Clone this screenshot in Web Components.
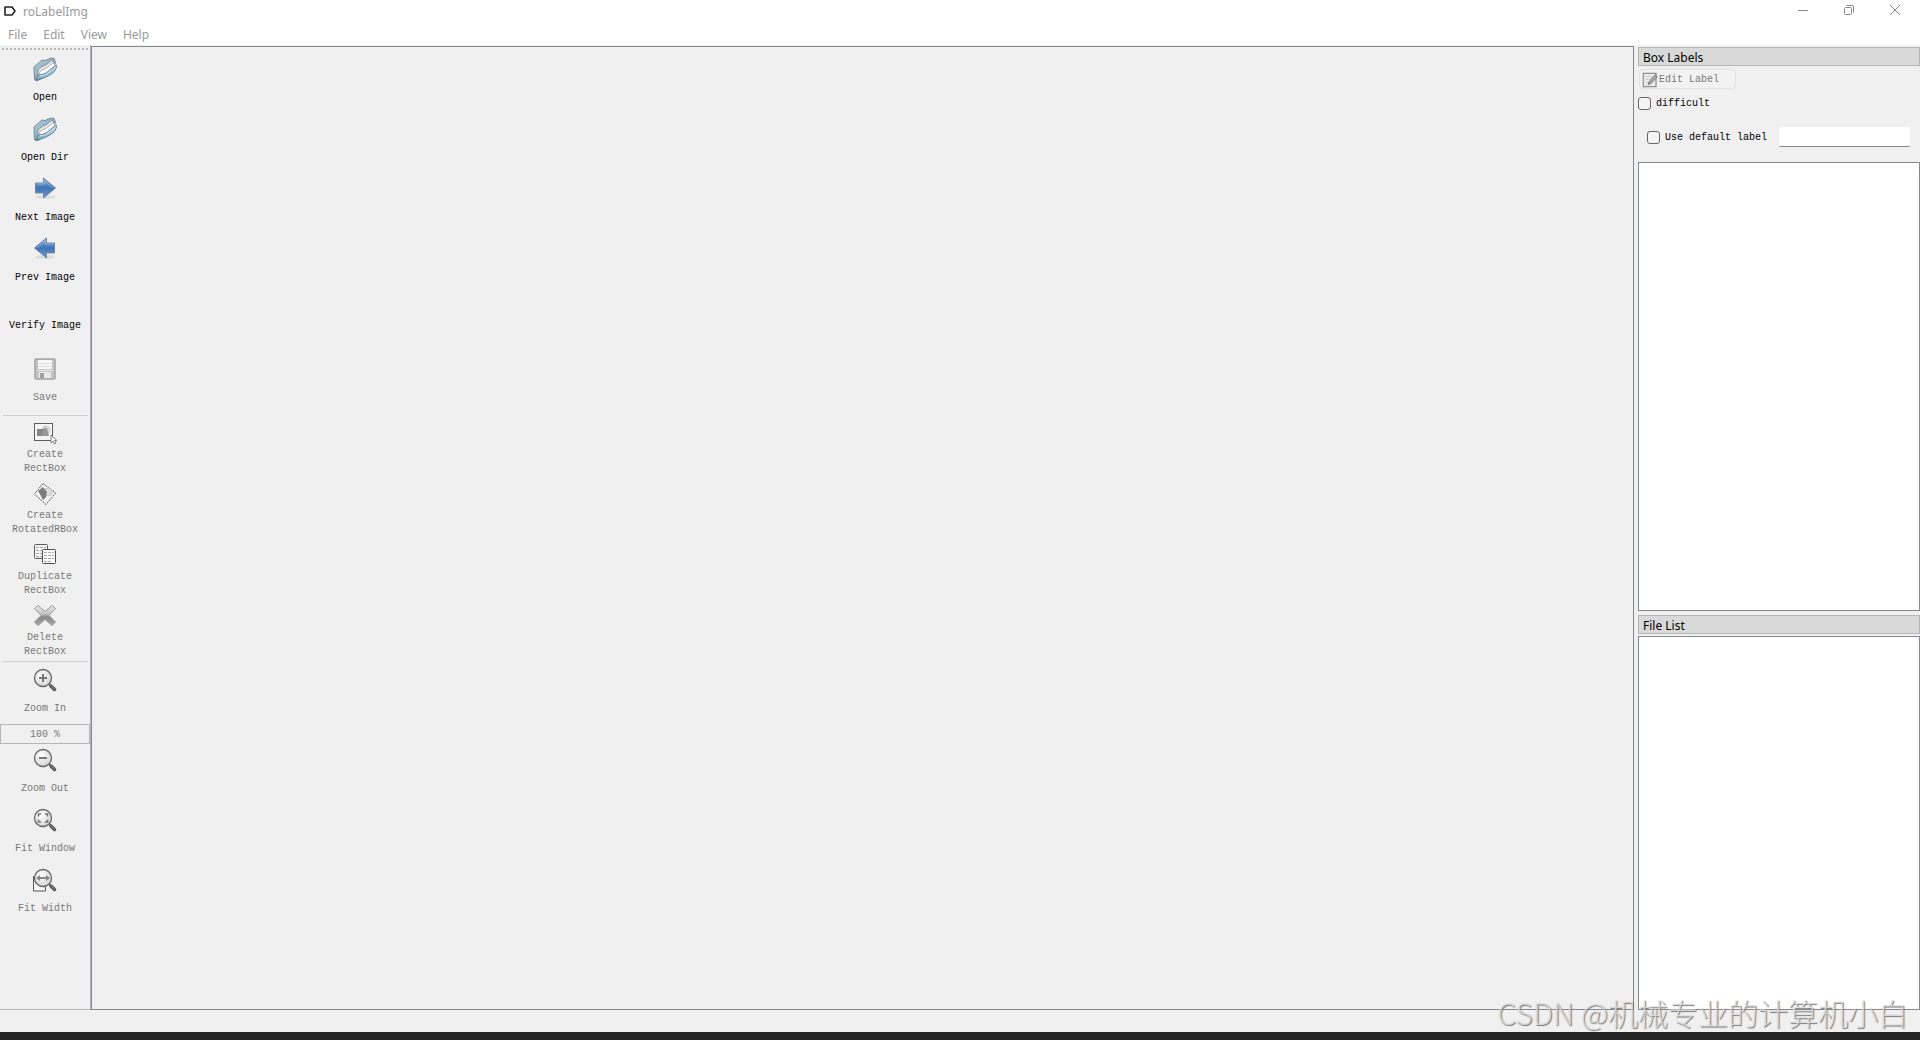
<!DOCTYPE html>
<html lang="en">
<head>
<meta charset="utf-8">
<title>roLabelImg</title>
<style>
  body {
    margin: 0;
    background: #f0f0f0;
    font-family: "Noto Sans", "Open Sans", sans-serif;
    font-size: 12px;
    color: #000;
    --mono: "Liberation Mono", monospace;
    --frame: #828790;
    --muted: #787878;
  }
</style>
</head>
<body>
<label-app></label-app>

<script>
/* eslint-env browser */

const lens = `
  <defs>
    <radialGradient id="glass" cx=".4" cy=".35" r=".7">
      <stop offset="0" stop-color="#fff"/><stop offset="1" stop-color="#d2d2d2"/>
    </radialGradient>
  </defs>
  <path d="M16 16l2.500 2.500" stroke="#777" stroke-width="2"/>
  <path d="M18 18l3.500 3.500" stroke="#555" stroke-width="3.500" stroke-linecap="round"/>
  <path d="M18 17.500l4 4" stroke="#999" stroke-width="1"/>
  <circle cx="10" cy="10" r="8.500" fill="url(#glass)" stroke="#666" stroke-width="1.300"/>`

const icons = {
  open: `
    <defs>
      <linearGradient id="back" x1="0" y1="0" x2="1" y2="1">
        <stop offset="0" stop-color="#b9d6e4"/><stop offset="1" stop-color="#5f8ca4"/>
      </linearGradient>
      <linearGradient id="front" x1="0" y1="0" x2="0" y2="1">
        <stop offset="0" stop-color="#c2e4f3"/><stop offset=".6" stop-color="#8fc0dc"/><stop offset="1" stop-color="#6ca6c8"/>
      </linearGradient>
    </defs>
    <path d="M1 10l8-7 3 .5 6-2.500 3 .5 1.500 4-3 8L5 23.500 1.500 22.500z" fill="url(#back)" stroke="#69757b" stroke-width=".8"/>
    <path d="M5 20V13c3-3 5-4 8-5l5.500-4.500 2 1V10l-8 6z" fill="#e4e6e7" stroke="#777" stroke-width=".6"/>
    <path d="M6 19c0-3 1-5 3-6 3-1 5-2 7-4l5-3.500 1 3-7 7z" fill="#fff" stroke="#888" stroke-width=".6"/>
    <path d="M2.500 23.500l3-5.500c4-.5 7-1 10-4 3-3 5-4 8-6l.3 1.500c-1 3-2 4.500-4 6.500-4 3-10 6-17.300 7.500z" fill="url(#front)" stroke="#5e6c74" stroke-width=".8"/>
    <path d="M6.500 19c5-.5 8-2 11-5" fill="none" stroke="#dff3fc" stroke-width=".8"/>`,
  next: `
    <defs><linearGradient id="blue" x1="0" y1="0" x2="0" y2="1">
      <stop offset="0" stop-color="#8db0d8"/><stop offset=".5" stop-color="#3f73b4"/><stop offset="1" stop-color="#6c9bd2"/>
    </linearGradient></defs>
    <ellipse cx="13" cy="20" rx="10" ry="2" fill="#000" opacity=".08"/>
    <path d="M2.500 6h8V1l12 10-12 10v-5h-8z" fill="url(#blue)" stroke="#7088a5"/>
    <path d="M3.500 7h8V3.500L20 11" fill="none" stroke="#a3bfe0" stroke-width=".8"/>`,
  prev: `
    <defs><linearGradient id="blue" x1="0" y1="0" x2="0" y2="1">
      <stop offset="0" stop-color="#8db0d8"/><stop offset=".5" stop-color="#3f73b4"/><stop offset="1" stop-color="#6c9bd2"/>
    </linearGradient></defs>
    <ellipse cx="12" cy="20" rx="10" ry="2" fill="#000" opacity=".08"/>
    <path d="M21.500 6h-8V1L1.500 11l12 10v-5h8z" fill="url(#blue)" stroke="#7088a5"/>
    <path d="M20.500 7h-8V3.500L4 11" fill="none" stroke="#a3bfe0" stroke-width=".8"/>`,
  save: `
    <rect x="2" y="2" width="20" height="20" rx="1" fill="#c4c4c4" stroke="#a2a2a2" stroke-width="1.500"/>
    <rect x="5" y="3" width="14" height="9" fill="#f7f7f7"/>
    <path d="M5 6.500h14M5 9.500h14" stroke="#dedede"/>
    <path d="M4 13.500h16" stroke="#e8e8e8"/>
    <rect x="6" y="15" width="12" height="6" fill="#e9e9e9"/>
    <rect x="7" y="16" width="4" height="5" fill="#a0a0a0"/>`,
  rect: `
    <rect x="1.500" y="2.500" width="18" height="17" fill="#f5f5f5" stroke="#888"/>
    <rect x="1.500" y="2.500" width="18" height="17" fill="none" stroke="#333" stroke-dasharray="1 1"/>
    <circle cx="13" cy="9" r="4" fill="#ddd" stroke="#c6c6c6"/>
    <path d="M4 8h7v7H4z" fill="#858585"/>
    <path d="M11 7h3l2 8H8z" fill="#979797"/>
    <path d="M18 14v8l2-2 1.500 3 1.500-1-1.500-2.500H24z" fill="#fff" stroke="#777" stroke-width=".9"/>`,
  rotated: `
    <path d="M10 1.500L22.500 11 13 22.500 1.500 12z" fill="#f5f5f5" stroke="#555" stroke-dasharray="2 1"/>
    <circle cx="15" cy="10" r="4" fill="#dedede" stroke="#c4c4c4"/>
    <path d="M5 9l5-4 4 5-1 5-3 3-2-4z" fill="#7c7c7c"/>`,
  copy: `
    <rect x="1.500" y="1.500" width="13" height="14" rx="1" fill="#f3f3f3" stroke="#5c5c5c"/>
    <path d="M3 4.500h10M3 7.500h10M3 10.500h10M3 13.500h6" stroke="#aaa" stroke-dasharray="3 1"/>
    <rect x="9.500" y="6.500" width="13" height="14" rx="1" fill="#fafafa" stroke="#4c4c4c"/>
    <path d="M11 9.500h10M11 12.500h10M11 15.500h10M11 18.500h7" stroke="#aaa" stroke-dasharray="3 1"/>`,
  remove: `
    <defs><linearGradient id="steel" gradientUnits="userSpaceOnUse" x1="0" y1="2" x2="0" y2="22">
      <stop offset="0" stop-color="#e8e8e8"/><stop offset=".4" stop-color="#c4c4c4"/><stop offset=".55" stop-color="#888"/><stop offset="1" stop-color="#ababab"/>
    </linearGradient></defs>
    <path d="M5 1.500l7 6 7-6 3.500 3-6.500 7 6.500 6.500L19 21.500l-7-6-7 6-3.500-3.500L8 11.500 1.500 4.500z" fill="url(#steel)" stroke="#999" stroke-linejoin="round"/>`,
  zoomIn: `${lens}<path d="M6 10h8M10 6v8" stroke="#777" stroke-width="2"/>`,
  zoomOut: `${lens}<path d="M6 10h8" stroke="#777" stroke-width="2"/>`,
  fitWindow: `${lens}<path d="M5.500 8.500V6h2.500M12 6h2.500v2.500M14.500 11.500V14H12M8 14H5.500v-2.500" fill="none" stroke="#777" stroke-width="1.600"/>`,
  fitWidth: `<path d="M.5 8v15h12V15" fill="#f5f5f5" stroke="#555"/>${lens}
    <path d="M3 10l4-3v2h6V7l4 3-4 3v-2H7v2z" fill="#888"/>`,
  edit: `
    <rect x="2" y="2" width="19" height="20" fill="#ededed" stroke="#8d8d8d" stroke-width="1.800"/>
    <path d="M5 7h11M5 11h8M5 15h5" stroke="#ccc" stroke-width="1.500"/>
    <path d="M9 19l2-5L20 4l3 3-9 10z" fill="#aaa" stroke="#707070" stroke-width="1.300"/>`
}

customElements.define('tool-icon', class extends HTMLElement {
  constructor () {
    super()
    this.attachShadow({ mode: 'open' })
    this.shadowRoot.innerHTML = `
      <style>
        :host { display: block; width: 24px; height: 24px; }
        svg { display: block; width: 100%; height: 100%; }
      </style>
      <svg viewBox="0 0 24 24" aria-hidden="true">${icons[this.getAttribute('name')] || ''}</svg>
    `
  }
})

customElements.define('tool-button', class extends HTMLElement {
  constructor () {
    super()
    this.attachShadow({ mode: 'open' })
    const icon = this.getAttribute('icon')
    this.shadowRoot.innerHTML = `
      <style>
        :host { display: block; }
        button {
          display: flex;
          flex-direction: column;
          align-items: center;
          box-sizing: border-box;
          width: 100%;
          height: 60px;
          margin: 0;
          padding: 5px 0 0;
          gap: 10px;
          border: 0;
          background: none;
          color: #000;
          font: 10px/14px var(--mono);
          text-align: center;
        }
        button:disabled { color: var(--muted); }
        :host([text-only]) button { justify-content: center; padding-top: 8px; }
        :host([tall]) button { height: 61px; padding-top: 4px; gap: 3px; }
        span { display: block; width: min-content; }
        :host(:not([tall])) span { width: auto; }
      </style>
      <button type="button" ${this.hasAttribute('disabled') ? 'disabled' : ''}>
        ${icon ? `<tool-icon name="${icon}"></tool-icon>` : ''}
        <span><slot></slot></span>
      </button>
    `
  }
})

customElements.define('tool-bar', class extends HTMLElement {
  constructor () {
    super()
    this.attachShadow({ mode: 'open' })
    this.shadowRoot.innerHTML = `
      <style>
        :host {
          display: block;
          box-sizing: border-box;
          width: 91px;
          padding-top: 3px;
          border-right: 1px solid #b5b5b5;
        }
        .grip {
          height: 2px;
          margin: 0 2px 2px;
          background: repeating-linear-gradient(90deg, #b8b8b8 0 2px, transparent 2px 4px);
        }
        hr {
          height: 1px;
          margin: 0 2px 1px 3px;
          border: 0;
          background: #cfcfcf;
        }
        .gap { height: 3px; }
        input {
          display: block;
          box-sizing: border-box;
          width: 100%;
          height: 20px;
          margin: 1px 0 0;
          padding: 1px 0 0;
          border: 1px solid #b5b5b5;
          border-radius: 0;
          background: #f0f0f0;
          color: var(--muted);
          font: 10px/14px var(--mono);
          text-align: center;
        }
        input + tool-button { margin-top: -1px; }
      </style>
      <div class="grip"></div>
      <tool-button icon="open">Open</tool-button>
      <tool-button icon="open">Open Dir</tool-button>
      <tool-button icon="next">Next Image</tool-button>
      <tool-button icon="prev">Prev Image</tool-button>
      <tool-button text-only>Verify Image</tool-button>
      <tool-button icon="save" disabled>Save</tool-button>
      <div class="gap"></div>
      <hr>
      <tool-button tall icon="rect" disabled>Create RectBox</tool-button>
      <tool-button tall icon="rotated" disabled>Create RotatedRBox</tool-button>
      <tool-button tall icon="copy" disabled>Duplicate RectBox</tool-button>
      <tool-button tall icon="remove" disabled>Delete RectBox</tool-button>
      <hr>
      <tool-button icon="zoomIn" disabled>Zoom In</tool-button>
      <input type="text" value="100 %" aria-label="Zoom level" disabled>
      <tool-button icon="zoomOut" disabled>Zoom Out</tool-button>
      <tool-button icon="fitWindow" disabled>Fit Window</tool-button>
      <tool-button icon="fitWidth" disabled>Fit Width</tool-button>
    `
  }
})

customElements.define('title-bar', class extends HTMLElement {
  constructor () {
    super()
    this.attachShadow({ mode: 'open' })
    this.shadowRoot.innerHTML = `
      <style>
        :host {
          display: flex;
          align-items: center;
          height: 22px;
          padding: 0 2px 0 3px;
          background: #fff;
          color: #999;
        }
        .logo { width: 14px; height: 12px; margin-right: 6px; }
        .controls { display: flex; margin-left: auto; }
        button {
          display: grid;
          place-items: center;
          width: 46px;
          height: 22px;
          padding: 0 0 2px;
          border: 0;
          background: none;
        }
        button svg { width: 12px; height: 12px; fill: none; stroke: #888; }
      </style>
      <svg class="logo" viewBox="0 0 14 12" aria-hidden="true">
        <path d="M2 2h7l3 4-3 4H2z" fill="#fff" stroke="#222" stroke-width="1.600" stroke-linejoin="round"/>
      </svg>
      <span><slot></slot></span>
      <div class="controls">
        <button type="button" aria-label="Minimize"><svg viewBox="0 0 12 12"><path d="M1 6.500h10"/></svg></button>
        <button type="button" aria-label="Restore"><svg viewBox="0 0 12 12"><rect x="1.500" y="3.500" width="7" height="7" rx="1"/><path d="M3.500 1.500H9a1.500 1.500 0 0 1 1.500 1.500v5.500"/></svg></button>
        <button type="button" aria-label="Close"><svg viewBox="0 0 12 12"><path d="M1 1l10 10M11 1L1 11"/></svg></button>
      </div>
    `
  }
})

customElements.define('menu-bar', class extends HTMLElement {
  constructor () {
    super()
    this.attachShadow({ mode: 'open' })
    const items = this.getAttribute('items').split(',')
    this.shadowRoot.innerHTML = `
      <style>
        :host { display: block; background: #fff; }
        nav {
          display: flex;
          gap: 16px;
          height: 23px;
          padding: 0 8px;
        }
        button {
          padding: 2px 0 0;
          border: 0;
          background: none;
          color: #999;
          font: inherit;
          line-height: 16px;
        }
      </style>
      <nav>${items.map(item => `<button type="button">${item}</button>`).join('')}</nav>
    `
  }
})

customElements.define('dock-panel', class extends HTMLElement {
  constructor () {
    super()
    this.attachShadow({ mode: 'open' })
    this.shadowRoot.innerHTML = `
      <style>
        :host {
          display: flex;
          flex-direction: column;
          gap: 2px;
          min-height: 0;
        }
        header {
          box-sizing: border-box;
          height: 19px;
          padding-left: 4px;
          border: 1px solid #b5b5b5;
          background: #d9d9d9;
          line-height: 19px;
        }
        .list {
          flex: 1;
          border: 1px solid var(--frame);
          background: #fff;
        }
      </style>
      <header>${this.getAttribute('heading')}</header>
      <slot></slot>
      <div class="list"></div>
    `
  }
})

customElements.define('label-options', class extends HTMLElement {
  constructor () {
    super()
    this.attachShadow({ mode: 'open' })
    this.shadowRoot.innerHTML = `
      <style>
        :host {
          display: block;
          padding-bottom: 13px;
          font: 10px/14px var(--mono);
        }
        .edit {
          display: flex;
          align-items: center;
          box-sizing: border-box;
          width: 97px;
          height: 20px;
          margin: 1px 0 0 1px;
          padding: 1px 3px 0 2px;
          border: 1px solid #e2e2e2;
          border-radius: 4px;
          background: #f2f2f2;
          color: var(--muted);
          font: inherit;
        }
        .edit tool-icon { width: 16px; height: 16px; margin-right: 1px; }
        .row { display: flex; align-items: center; }
        .difficult { height: 14px; margin-top: 7px; }
        .default { height: 20px; margin: 17px 10px 0 9px; }
        label { padding-top: 2px; }
        [type=checkbox] {
          appearance: none;
          box-sizing: border-box;
          flex: none;
          width: 13px;
          height: 13px;
          margin: 0 5px 0 0;
          border: 1px solid #666;
          border-radius: 3px;
          background: #f5f5f5;
        }
        [type=text] {
          flex: 1;
          box-sizing: border-box;
          min-width: 0;
          height: 20px;
          margin-left: 12px;
          padding: 0 4px;
          border: 0;
          border-bottom: 1px solid #868686;
          border-radius: 2px;
          background: #fff;
          font: inherit;
        }
      </style>
      <button class="edit" type="button" disabled><tool-icon name="edit"></tool-icon>Edit Label</button>
      <div class="row difficult">
        <input type="checkbox" id="difficult"><label for="difficult">difficult</label>
      </div>
      <div class="row default">
        <input type="checkbox" id="use-default"><label for="use-default">Use default label</label>
        <input type="text" aria-label="Default label">
      </div>
    `
  }
})

customElements.define('water-mark', class extends HTMLElement {
  constructor () {
    super()
    this.attachShadow({ mode: 'open' })
    this.shadowRoot.innerHTML = `
      <style>
        :host {
          position: absolute;
          right: 12px;
          bottom: 10px;
          color: rgba(226, 226, 226, .8);
          font: 300 30px/36px "Noto Sans CJK SC", sans-serif;
          text-shadow: 1px 1px 1px #777;
          white-space: nowrap;
          pointer-events: none;
        }
      </style>
      <slot></slot>
    `
  }
})

customElements.define('label-app', class extends HTMLElement {
  constructor () {
    super()
    this.attachShadow({ mode: 'open' })
    this.shadowRoot.innerHTML = `
      <style>
        :host {
          position: relative;
          display: flex;
          flex-direction: column;
          min-height: 100vh;
        }
        .work { display: flex; flex: 1; }
        main {
          flex: 1;
          margin-top: 1px;
          border: 1px solid var(--frame);
        }
        tool-bar { border-bottom: 1px solid #b5b5b5; }
        aside {
          display: grid;
          grid-template-rows: 10fr 7fr;
          gap: 4px;
          width: 282px;
          padding: 2px 0 0 4px;
        }
        .status { height: 22px; }
        .desk { height: 8px; background: #242424; }
      </style>
      <title-bar>roLabelImg</title-bar>
      <menu-bar items="File,Edit,View,Help"></menu-bar>
      <div class="work">
        <tool-bar></tool-bar>
        <main></main>
        <aside>
          <dock-panel heading="Box Labels"><label-options></label-options></dock-panel>
          <dock-panel heading="File List"></dock-panel>
        </aside>
      </div>
      <footer>
        <div class="status"></div>
        <div class="desk"></div>
      </footer>
      <water-mark>CSDN @机械专业的计算机小白</water-mark>
    `
  }
})
</script>
</body>
</html>
